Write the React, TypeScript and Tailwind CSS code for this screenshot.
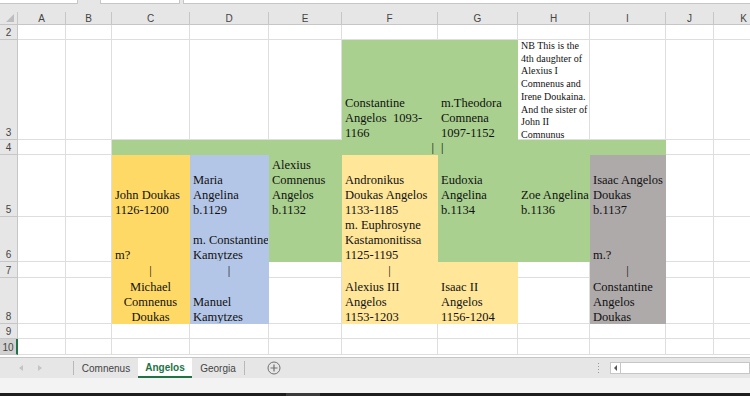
import clsx from 'clsx';

type Cell = {
  fill?: string;
  lines?: string[];
  align?: 'left' | 'center' | 'right';
  small?: boolean;
};

const green = 'bg-[#a9d08e] border-[#a9d08e]';
const gold = 'bg-[#ffd966] border-[#ffd966]';
const blue = 'bg-[#b4c6e7] border-[#b4c6e7]';
const cream = 'bg-[#ffe699] border-[#ffe699]';
const grey = 'bg-[#aeaaaa] border-[#aeaaaa]';

const columns = [
  { id: 'A', w: 'w-[48px]' },
  { id: 'B', w: 'w-[46px]' },
  { id: 'C', w: 'w-[78px]' },
  { id: 'D', w: 'w-[79px]' },
  { id: 'E', w: 'w-[73px]' },
  { id: 'F', w: 'w-[96px]' },
  { id: 'G', w: 'w-[80px]' },
  { id: 'H', w: 'w-[72px]' },
  { id: 'I', w: 'w-[76px]' },
  { id: 'J', w: 'w-[48px]' },
  { id: 'K', w: 'w-[60px]' }
];

const rows = [
  { n: 2, h: 'h-[15px]' },
  { n: 3, h: 'h-[100px]' },
  { n: 4, h: 'h-[15px]' },
  { n: 5, h: 'h-[62px]' },
  { n: 6, h: 'h-[45px]' },
  { n: 7, h: 'h-[16px]' },
  { n: 8, h: 'h-[46px]' },
  { n: 9, h: 'h-[15px]' },
  { n: 10, h: 'h-[16px]' }
];

const cells: Record<string, Cell> = {
  F3: { fill: green, lines: ['Constantine', 'Angelos  1093-', '1166'] },
  G3: { fill: green, lines: ['m.Theodora', 'Comnena', '1097-1152'] },
  H3: {
    small: true,
    lines: [
      'NB This is the',
      '4th daughter of',
      'Alexius I',
      'Comnenus and',
      'Irene Doukaina.',
      'And the sister of',
      'John II',
      'Comnunus'
    ]
  },
  C4: { fill: green },
  D4: { fill: green },
  E4: { fill: green },
  F4: { fill: green, lines: ['|'], align: 'right' },
  G4: { fill: green, lines: ['|'] },
  H4: { fill: green },
  I4: { fill: green },
  C5: { fill: gold, lines: ['John Doukas', '1126-1200'] },
  C6: { fill: gold, lines: ['m?'] },
  C7: { fill: gold, lines: ['|'], align: 'center' },
  C8: { fill: gold, lines: ['Michael', 'Comnenus', 'Doukas'], align: 'center' },
  D5: { fill: blue, lines: ['Maria', 'Angelina', 'b.1129'] },
  D6: { fill: blue, lines: ['m. Constantine', 'Kamytzes'] },
  D7: { fill: blue, lines: ['|'], align: 'center' },
  D8: { fill: blue, lines: ['Manuel', 'Kamytzes'] },
  E5: { fill: green, lines: ['Alexius', 'Comnenus', 'Angelos', 'b.1132'] },
  E6: { fill: green },
  F5: { fill: cream, lines: ['Andronikus', 'Doukas Angelos', '1133-1185'] },
  F6: { fill: cream, lines: ['m. Euphrosyne', 'Kastamonitissa', '1125-1195'] },
  F7: { fill: cream, lines: ['|'], align: 'center' },
  F8: { fill: cream, lines: ['Alexius III', 'Angelos', '1153-1203'] },
  G5: { fill: green, lines: ['Eudoxia', 'Angelina', 'b.1134'] },
  G6: { fill: green },
  G7: { fill: cream },
  G8: { fill: cream, lines: ['Isaac II', 'Angelos', '1156-1204'] },
  H5: { fill: green, lines: ['Zoe Angelina', 'b.1136'] },
  H6: { fill: green },
  I5: { fill: grey, lines: ['Isaac Angelos', 'Doukas', 'b.1137'] },
  I6: { fill: grey, lines: ['m.?'] },
  I7: { fill: grey, lines: ['|'], align: 'center' },
  I8: { fill: grey, lines: ['Constantine', 'Angelos', 'Doukas'] }
};

const SheetCell = ({ id, w, h }: { id: string; w: string; h: string }) => {
  const c = cells[id];
  return (
    <div
      className={clsx(
        "flex shrink-0 flex-col overflow-hidden border-r border-b px-[3px] font-['Liberation_Serif',serif] text-[#111]",
        w,
        h,
        c?.fill ? c.fill : 'border-[#dedede] bg-white',
        c?.small ? 'justify-start text-[10px] leading-[12.7px]' : 'justify-end text-[12.5px] leading-[15px]'
      )}
    >
      {c?.lines && (
        <div
          className={clsx(
            'flex flex-col',
            !c.small && '-mb-[2px]',
            c.align === 'center' && 'items-center',
            c.align === 'right' && 'items-end'
          )}
        >
          {c.lines.map((line, i) => (
            <span key={i} className="whitespace-pre">
              {line}
            </span>
          ))}
        </div>
      )}
    </div>
  );
};

const TopStrip = () => (
  <div className="flex h-[12px] shrink-0 items-start bg-[#e6e6e6]">
    <div className="h-[4px] w-[78px] border-r border-b border-[#c6c6c6] bg-white" />
    <div className="ml-[22px] h-[4px] w-[80px] border-x border-b border-[#c6c6c6] bg-white" />
    <div className="ml-[3px] h-[4px] flex-1 border-l border-b border-[#c6c6c6] bg-white" />
  </div>
);

const Sheet = () => (
  <div className="flex shrink-0 flex-col">
    {/* Column headers */}
    <div className="flex h-[13px] font-['Liberation_Sans',sans-serif] text-[10px] text-[#444]">
      <div className="relative w-[18px] shrink-0 border-r border-b border-[#c6c6c6] bg-[#e6e6e6]">
        <svg className="absolute right-[3px] bottom-[2px]" width="8" height="8" viewBox="0 0 8 8">
          <polygon points="8,0 8,8 0,8" fill="#bdbdbd" />
        </svg>
      </div>
      {columns.map((col) => (
        <div
          key={col.id}
          className={clsx(
            'flex shrink-0 items-center justify-center border-r border-b border-[#c6c6c6] bg-[#e6e6e6]',
            col.w
          )}
        >
          {col.id}
        </div>
      ))}
    </div>

    {/* Rows */}
    {rows.map((row) => (
      <div key={row.n} className="flex">
        <div
          className={clsx(
            "flex w-[18px] shrink-0 items-end justify-center border-b font-['Liberation_Sans',sans-serif] text-[10px] leading-[13px] text-[#444]",
            row.h,
            row.n === 10
              ? 'border-r-2 border-b-[#c6c6c6] border-r-[#217346] bg-[#d2d2d2]'
              : 'border-r border-[#c6c6c6] bg-[#e6e6e6]'
          )}
        >
          {row.n}
        </div>
        {columns.map((col) => (
          <SheetCell key={col.id} id={`${col.id}${row.n}`} w={col.w} h={row.h} />
        ))}
      </div>
    ))}
    <div className="h-[2px] bg-white" />
  </div>
);

const TabBar = () => (
  <div className="flex h-[21px] shrink-0 items-stretch border-t border-[#c6c6c6] bg-[#e6e6e6] font-['Liberation_Sans',sans-serif] text-[10px] text-[#444]">
    <div className="flex w-[73px] shrink-0 items-center gap-[15px] pl-[19px]">
      <svg width="4" height="6" viewBox="0 0 4 6">
        <polygon points="4,0 4,6 0,3" fill="#c4c4c4" />
      </svg>
      <svg width="4" height="6" viewBox="0 0 4 6">
        <polygon points="0,0 0,6 4,3" fill="#c4c4c4" />
      </svg>
    </div>
    <div className="my-[3px] w-px bg-[#b8b8b8]" />
    <div className="flex w-[64px] items-center justify-center">Comnenus</div>
    <div className="flex w-[54px] items-center justify-center border-b-2 border-[#217346] bg-white pt-[1px] font-bold text-[#217346]">
      Angelos
    </div>
    <div className="flex w-[52px] items-center justify-center">Georgia</div>
    <div className="my-[3px] w-px bg-[#b8b8b8]" />
    <div className="flex w-[58px] items-center justify-center">
      <svg width="14" height="14" viewBox="0 0 14 14">
        <circle cx="7" cy="7" r="6" fill="none" stroke="#707070" strokeWidth="1" />
        <path d="M7 3.5v7M3.5 7h7" stroke="#707070" strokeWidth="1.2" />
      </svg>
    </div>
    <div className="flex flex-1 items-center justify-end pr-[11px]">
      <div className="flex flex-col gap-[2px]">
        <div className="h-[1px] w-[1px] bg-[#999]" />
        <div className="h-[1px] w-[1px] bg-[#999]" />
        <div className="h-[1px] w-[1px] bg-[#999]" />
        <div className="h-[1px] w-[1px] bg-[#999]" />
      </div>
    </div>
    <div className="my-[4px] flex w-[140px] shrink-0 border border-[#c6c6c6] bg-white">
      <div className="flex w-[10px] items-center justify-center border-r border-[#c6c6c6]">
        <svg width="3" height="6" viewBox="0 0 3 6">
          <polygon points="3,0 3,6 0,3" fill="#555" />
        </svg>
      </div>
    </div>
  </div>
);

const App = () => {
  return (
    <div className="flex h-[396px] w-[750px] flex-col overflow-hidden bg-[#e6e6e6]">
      <TopStrip />
      <Sheet />
      <TabBar />
      <div className="h-[15px] shrink-0 bg-[#f3f3f3]" />
      <div className="flex h-[3px] shrink-0 bg-[#1e1e1e]">
        <div className="ml-[286px] w-[34px] bg-[#3a3a3a]" />
      </div>
    </div>
  );
};

export default App;
